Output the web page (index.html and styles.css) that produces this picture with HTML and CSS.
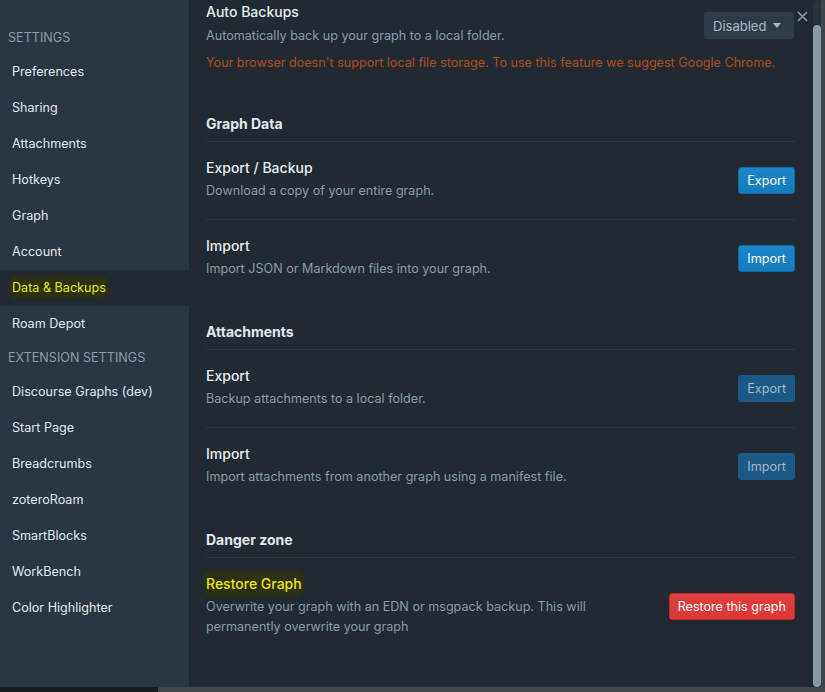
FILE: index.html
```html
<!DOCTYPE html>
<html>
<head>
<meta charset="utf-8">
<link rel="stylesheet" href="styles.css">
</head>
<body>
<div class="app">
  <div class="dialog">
    <nav class="sidebar">
      <div class="nav-head">Settings</div>
      <div class="nav-item">Preferences</div>
      <div class="nav-item">Sharing</div>
      <div class="nav-item">Attachments</div>
      <div class="nav-item">Hotkeys</div>
      <div class="nav-item">Graph</div>
      <div class="nav-item">Account</div>
      <div class="nav-item active"><span class="hl">Data &amp; Backups</span></div>
      <div class="nav-item">Roam Depot</div>
      <div class="nav-head">Extension Settings</div>
      <div class="nav-item">Discourse Graphs (dev)</div>
      <div class="nav-item">Start Page</div>
      <div class="nav-item">Breadcrumbs</div>
      <div class="nav-item">zoteroRoam</div>
      <div class="nav-item">SmartBlocks</div>
      <div class="nav-item">WorkBench</div>
      <div class="nav-item">Color Highlighter</div>
    </nav>
    <main class="main">
      <button class="close" aria-label="Close">
        <svg width="11" height="11" viewBox="0 0 11 11"><path d="M1 1L10 10M10 1L1 10" stroke="#8a9ba8" stroke-width="1.6" fill="none"/></svg>
      </button>
      <div class="auto">
        <div class="row-top">
          <div class="row-text">
            <div class="title">Auto Backups</div>
            <div class="desc first">Automatically back up your graph to a local folder.</div>
          </div>
          <div class="select">
            <span>Disabled</span>
            <svg width="8" height="5" viewBox="0 0 8 5"><path d="M0 0H8L4 5Z" fill="#a7b6c2"/></svg>
          </div>
        </div>
        <div class="warn">Your browser doesn't support local file storage. To use this feature we suggest Google Chrome.</div>
      </div>

      <section class="section">
        <h3 class="sec-head">Graph Data</h3>
        <div class="row">
          <div class="row-text">
            <div class="title">Export / Backup</div>
            <div class="desc">Download a copy of your entire graph.</div>
          </div>
          <button class="btn primary">Export</button>
        </div>
        <div class="row last">
          <div class="row-text">
            <div class="title">Import</div>
            <div class="desc">Import JSON or Markdown files into your graph.</div>
          </div>
          <button class="btn primary">Import</button>
        </div>
      </section>

      <section class="section">
        <h3 class="sec-head">Attachments</h3>
        <div class="row">
          <div class="row-text">
            <div class="title">Export</div>
            <div class="desc">Backup attachments to a local folder.</div>
          </div>
          <button class="btn primary disabled">Export</button>
        </div>
        <div class="row last">
          <div class="row-text">
            <div class="title">Import</div>
            <div class="desc">Import attachments from another graph using a manifest file.</div>
          </div>
          <button class="btn primary disabled">Import</button>
        </div>
      </section>

      <section class="section">
        <h3 class="sec-head">Danger zone</h3>
        <div class="row last">
          <div class="row-text">
            <div class="title"><span class="hl">Restore Graph</span></div>
            <div class="desc narrow">Overwrite your graph with an EDN or msgpack backup. This will permanently overwrite your graph</div>
          </div>
          <button class="btn danger">Restore this graph</button>
        </div>
      </section>
    </main>
    <div class="scrollbar"><div class="track-top"></div><div class="thumb"></div></div>
  </div>
  <div class="bottom">
    <div class="bottom-left"></div>
  </div>
</div>
</body>
</html>
```

FILE: styles.css
```css
* { box-sizing: border-box; }
html, body { margin: 0; padding: 0; }
body {
  background: #3e4447;
  font-family: Inter, "Noto Sans", "Liberation Sans", sans-serif;
  font-size: 12.6px;
  width: 825px;
  height: 692px;
  overflow: hidden;
}
.app { display: flex; flex-direction: column; height: 692px; }
.dialog { display: flex; height: 687px; width: 821px; }

.sidebar {
  width: 189px;
  flex: none;
  background: #2a3641;
  padding-top: 22px;
}
.nav-head {
  height: 32px;
  line-height: 32px;
  padding-left: 8px;
  text-transform: uppercase;
  color: #8a9ba8;
  font-size: 12.6px;
}
.nav-item {
  height: 36px;
  line-height: 36px;
  padding-left: 12px;
  color: #e1e8ed;
  font-size: 12.6px;
}
.nav-item.active { background: #212a33; }
.hl {
  background: #2d3112;
  color: #e6e619;
  border-radius: 4px;
  padding: 2px 0;
  box-shadow: 0 0 3px 2px #2d3112;
}

.main {
  flex: 1;
  background: #212a32;
  padding: 3px 18px 0 17px;
  position: relative;
  color: #e1e8ed;
}
.close {
  position: absolute;
  top: 11px;
  right: 5px;
  background: none;
  border: 0;
  padding: 0;
  width: 11px;
  height: 11px;
  line-height: 0;
}
.row-top {
  display: flex;
  align-items: flex-start;
  justify-content: space-between;
}
.row {
  display: flex;
  align-items: center;
  justify-content: space-between;
  padding: 17px 0 18px;
  border-bottom: 1px solid #2c3741;
}
.row.last { border-bottom: 0; }
.title {
  font-size: 14px;
  line-height: 18px;
  font-weight: 500;
  color: #e8edf0;
}
.desc {
  font-size: 12.6px;
  line-height: 20px;
  margin-top: 4px;
  color: #8a9ba8;
}
.desc.first { margin-top: 5px; }
.desc.narrow { width: 400px; }
.warn {
  font-size: 12.6px;
  line-height: 20px;
  margin-top: 7px;
  color: #b04a1d;
  white-space: nowrap;
}
.select {
  margin-top: 9px;
  margin-right: 1px;
  width: 90px;
  height: 27px;
  background: #2e3c48;
  border-radius: 3px;
  color: #a7b6c2;
  font-size: 13px;
  display: flex;
  align-items: center;
  justify-content: space-between;
  padding: 0 13px 0 9px;
  flex: none;
}

.section { margin-top: 42px; }
.section + .section { margin-top: 26px; }
.sec-head {
  margin: 0;
  font-size: 14px;
  line-height: 18px;
  font-weight: 700;
  color: #e1e8ed;
  padding-bottom: 8px;
  border-bottom: 1px solid #2c3741;
}

.btn {
  flex: none;
  font-family: inherit;
  font-size: 12.6px;
  height: 27px;
  padding: 0 8px;
  border-radius: 3px;
  cursor: pointer;
  color: #fff;
  line-height: 25px;
  white-space: nowrap;
}
.btn.primary {
  min-width: 56px;
  background: linear-gradient(#1c86c8, #137cbd);
  border: 1px solid #0f6aa3;
}
.btn.primary.disabled {
  background: #1b5a84;
  border-color: #1b5a84;
  color: #a7b6c2;
}
.btn.danger {
  background: linear-gradient(#e03f3f, #db3737);
  border: 1px solid #b82c2c;
}

.scrollbar {
  width: 8px;
  flex: none;
  display: flex;
  flex-direction: column;
  background: #212a32;
}
.track-top { height: 25px; background: #28323b; border-radius: 4px 4px 0 0; }
.thumb { flex: 1; background: #8a9ba8; border-radius: 4px; }

.bottom { height: 5px; display: flex; background: #414649; }
.bottom-left { width: 158px; background: #171c21; }
```
